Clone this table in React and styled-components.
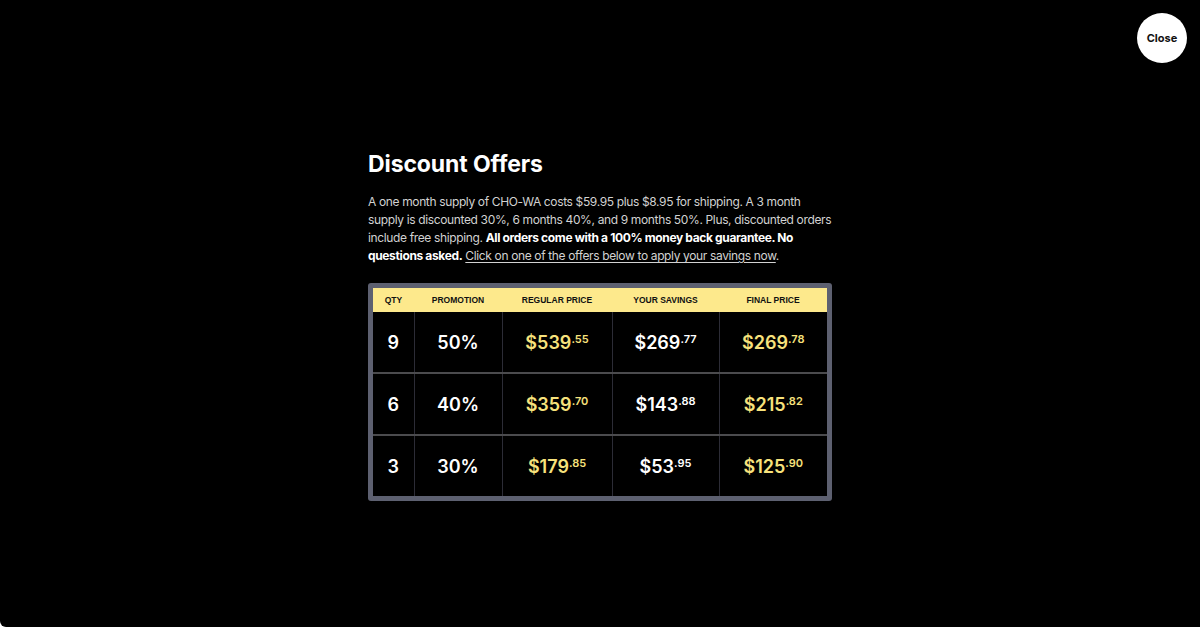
import React from 'react';
import styled, { createGlobalStyle } from 'styled-components';

const GlobalStyle = createGlobalStyle`
  html, body {
    margin: 0;
    padding: 0;
    background: #ffffff;
  }
  body {
    font-family: Inter, "Noto Sans", "Liberation Sans", sans-serif;
  }
`;

const Page = styled.div`
  width: 1200px;
  height: 627px;
  background: #000000;
  border-bottom-left-radius: 6px;
  display: flex;
  justify-content: center;
  box-sizing: border-box;
  padding-top: 148px;
  position: relative;
  overflow: hidden;
`;

const CloseButton = styled.button`
  position: absolute;
  top: 13px;
  right: 13px;
  width: 50px;
  height: 50px;
  border-radius: 50%;
  border: none;
  background: #ffffff;
  color: #111;
  font-family: Inter, "Liberation Sans", sans-serif;
  font-size: 11px;
  font-weight: 700;
  cursor: pointer;
  padding: 0;
`;

const Content = styled.div`
  width: 464px;
  display: flex;
  flex-direction: column;
`;

const Title = styled.h1`
  margin: 0;
  color: #ffffff;
  font-size: 23px;
  font-weight: 700;
  line-height: 32px;
  letter-spacing: -0.1px;
`;

const Intro = styled.p`
  margin: 13px 0 0;
  color: #d2d2d2;
  font-size: 12px;
  line-height: 18px;
  letter-spacing: -0.36px;

  strong {
    color: #ffffff;
    font-weight: 700;
  }

  a {
    color: #d2d2d2;
    text-decoration: underline;
    text-underline-offset: 2px;
  }
`;

const TableFrame = styled.div`
  margin-top: 18px;
  background: #5d6070;
  padding: 5px;
  border-radius: 3px;
`;

const Table = styled.table`
  width: 100%;
  border-collapse: collapse;
  table-layout: fixed;
  background: #000000;
`;

const Th = styled.th`
  background: #fde98c;
  color: #111111;
  font-family: "Liberation Sans", Arial, sans-serif;
  font-size: 8.5px;
  font-weight: 700;
  text-transform: uppercase;
  height: 24px;
  padding: 0;
  text-align: center;
`;

const Tr = styled.tr`
  & + & td {
    border-top: 2px solid #4b4b4e;
  }
`;

const Td = styled.td`
  height: 60px;
  padding: 0;
  text-align: center;
  color: ${(p) => (p.$yellow ? '#f7e27c' : '#ffffff')};
  font-size: 18px;
  font-weight: 600;
  border-left: 1px solid #2c2c36;

  &:first-child {
    border-left: none;
  }
`;

const Cents = styled.sup`
  font-size: 11px;
  font-weight: 600;
  vertical-align: 6px;
  line-height: 0;
`;

const Price = ({ value }) => {
  const [whole, cents] = value.split('.');
  return (
    <>
      ${whole}
      <Cents>.{cents}</Cents>
    </>
  );
};

const offers = [
  { qty: 9, promo: '50%', regular: '539.55', savings: '269.77', final: '269.78' },
  { qty: 6, promo: '40%', regular: '359.70', savings: '143.88', final: '215.82' },
  { qty: 3, promo: '30%', regular: '179.85', savings: '53.95', final: '125.90' },
];

export default function App() {
  return (
    <>
      <GlobalStyle />
      <Page>
        <CloseButton>Close</CloseButton>
        <Content>
          <Title>Discount Offers</Title>
          <Intro>
            A one month supply of CHO-WA costs $59.95 plus $8.95 for shipping. A 3 month
            supply is discounted 30%, 6 months 40%, and 9 months 50%. Plus, discounted orders
            include free shipping. <strong>All orders come with a 100% money back guarantee. No
            questions asked.</strong> <a href="#">Click on one of the offers below to apply your savings now</a>.
          </Intro>
          <TableFrame>
            <Table>
              <colgroup>
                <col style={{ width: '41px' }} />
                <col style={{ width: '88px' }} />
                <col style={{ width: '110px' }} />
                <col style={{ width: '107px' }} />
                <col />
              </colgroup>
              <thead>
                <tr>
                  <Th>Qty</Th>
                  <Th>Promotion</Th>
                  <Th>Regular Price</Th>
                  <Th>Your Savings</Th>
                  <Th>Final Price</Th>
                </tr>
              </thead>
              <tbody>
                {offers.map((o) => (
                  <Tr key={o.qty}>
                    <Td>{o.qty}</Td>
                    <Td>{o.promo}</Td>
                    <Td $yellow><Price value={o.regular} /></Td>
                    <Td><Price value={o.savings} /></Td>
                    <Td $yellow><Price value={o.final} /></Td>
                  </Tr>
                ))}
              </tbody>
            </Table>
          </TableFrame>
        </Content>
      </Page>
    </>
  );
}
